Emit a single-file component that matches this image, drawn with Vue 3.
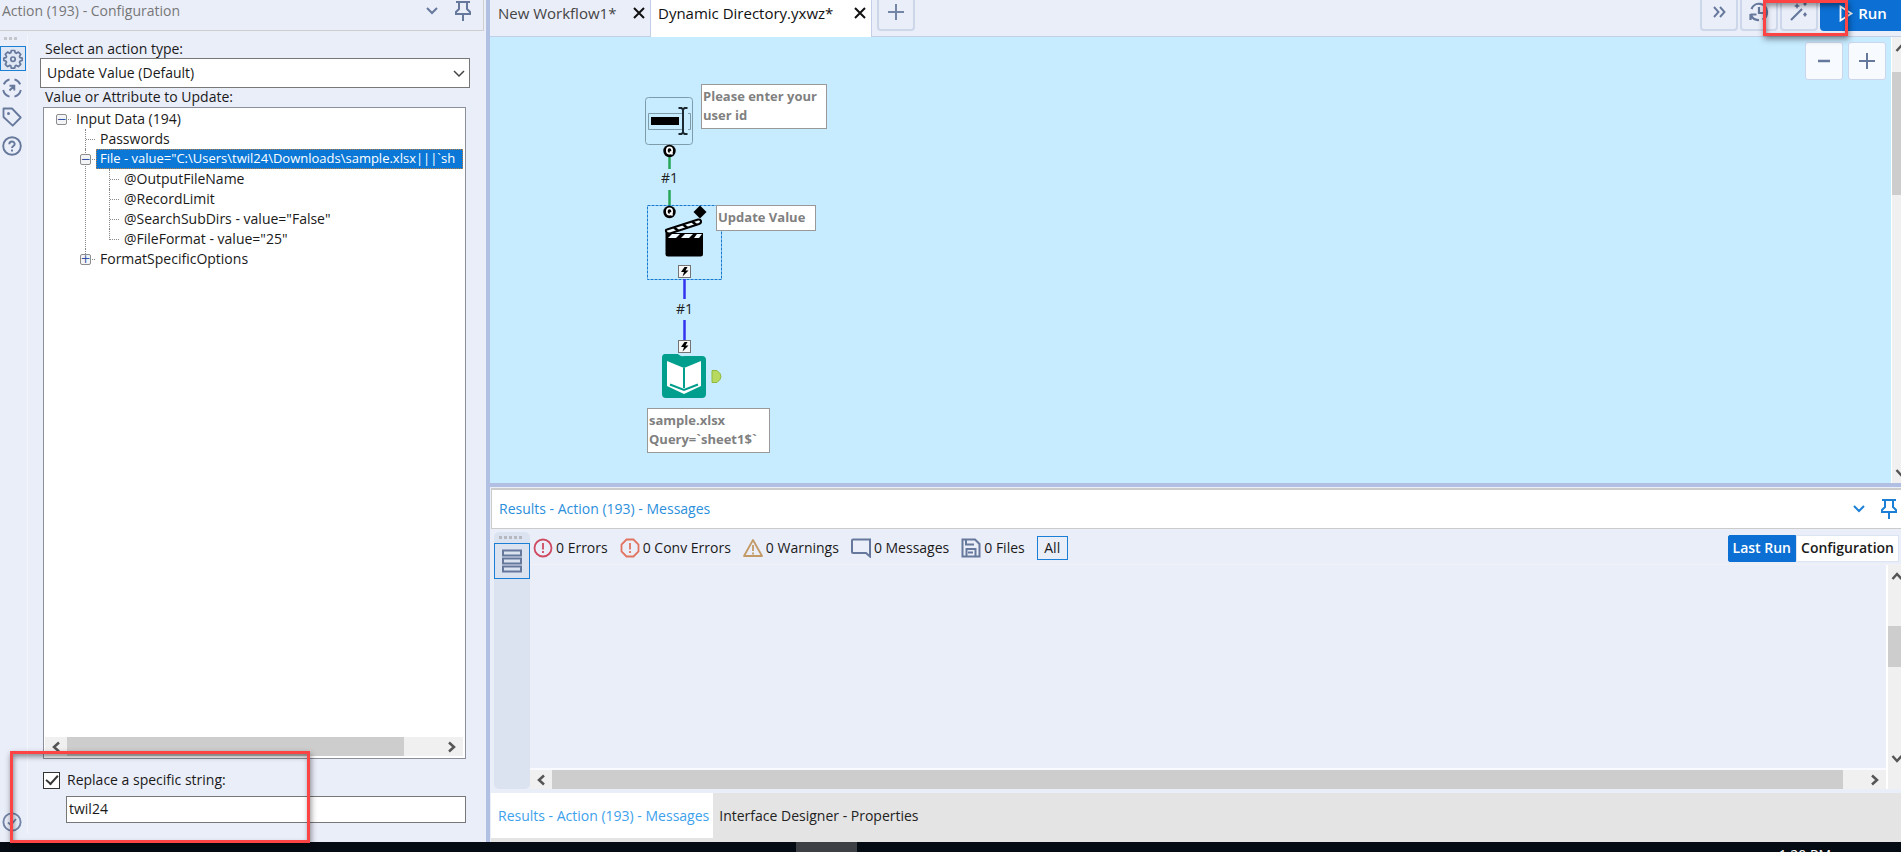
<script setup>
import { ref } from 'vue'

const action = ref('Update Value (Default)')
const replace = ref(true)
const search = ref('twil24')

const children = [
  { label: 'Passwords' },
  {
    label: 'File - value="C:\\Users\\twil24\\Downloads\\sample.xlsx|||`sh',
    toggle: '−',
    selected: true,
    children: ['@OutputFileName', '@RecordLimit', '@SearchSubDirs - value="False"', '@FileFormat - value="25"'],
  },
  { label: 'FormatSpecificOptions', toggle: '+' },
]
</script>

<template>
  <div class="app">
    <div class="main">
      <section class="config">
        <header class="config-head">
          <span class="config-title">Action (193) - Configuration</span>
          <button class="plain" aria-label="Panel menu">
            <svg width="14" height="10" viewBox="0 0 14 10"><path d="M2 2l5 5 5-5" fill="none" stroke="#66789c" stroke-width="2" /></svg>
          </button>
          <button class="plain pin" aria-label="Pin panel">
            <svg width="18" height="22" viewBox="0 0 18 22"><path d="M2 2h14M5 2v7l-3 3v2h14v-2l-3-3V2M9 14v7" fill="none" stroke="#66789c" stroke-width="2" /></svg>
          </button>
        </header>
        <div class="config-body">
          <nav class="rail">
            <span class="grip"></span>
            <button class="rail-btn active" aria-label="Configuration">
              <svg width="20" height="20" viewBox="0 0 20 20" fill="none" stroke="#66789c" stroke-width="1.7" stroke-linejoin="round">
                <path d="M8.3 1.5h3.4l.5 2.3 1.2.5 2-1.2 2.3 2.3-1.2 2 .5 1.2 2.2.5v2.4l-2.2.6-.5 1.2 1.2 2-2.3 2.3-2-1.2-1.2.5-.5 2.2H8.300l-.5-2.200-1.200-.5-2 1.200-2.300-2.300 1.200-2-.5-1.200-2.200-.6V9.100L3 8.600l.5-1.200-1.200-2 2.300-2.300 2 1.200 1.200-.5z" />
                <circle cx="10" cy="10.200" r="2.200" />
              </svg>
            </button>
            <button class="rail-btn" aria-label="Navigation">
              <svg width="20" height="20" viewBox="0 0 20 20" fill="none" stroke="#66789c" stroke-width="1.9">
                <path d="M7.500 1.300a9 9 0 0 0-5.700 5M12.500 1.300a9 9 0 0 1 5.700 5M1.200 12a9 9 0 0 0 6.300 6.700M18.800 12a9 9 0 0 1-6.300 6.700M7.500 12.500l4.500-4.500M7.500 7.700h4.800v4.800" />
              </svg>
            </button>
            <button class="rail-btn" aria-label="Annotation">
              <svg width="20" height="20" viewBox="0 0 20 20" fill="none" stroke="#66789c" stroke-width="1.800" stroke-linejoin="round">
                <path d="M1.500 1.500h8.500l8.700 9-8 8.200-9.200-8.700z" /><circle cx="6.500" cy="6.500" r="1.500" fill="#66789c" stroke="none" />
              </svg>
            </button>
            <button class="rail-btn" aria-label="Help">
              <svg width="20" height="20" viewBox="0 0 20 20" fill="none" stroke="#66789c" stroke-width="1.900">
                <circle cx="10" cy="10" r="8.800" /><path d="M7.300 8.200c0-3.500 5.400-3.500 5.400-.2 0 2-2.700 1.900-2.700 4" /><path d="M10 13.500v2" />
              </svg>
            </button>
            <button class="rail-btn check" aria-label="Status">
              <svg width="20" height="20" viewBox="0 0 20 20" fill="none" stroke="#7283a6" stroke-width="1.900">
                <circle cx="10" cy="10" r="8.600" /><path d="M6 10.500l3 2.500 5-6" />
              </svg>
            </button>
          </nav>
          <div class="form">
            <label for="action" class="lbl">Select an action type:</label>
            <div class="select-wrap">
              <select id="action" v-model="action"><option>Update Value (Default)</option></select>
              <svg class="caret" width="12" height="8" viewBox="0 0 12 8"><path d="M1 1l5 5 5-5" fill="none" stroke="#444" stroke-width="1.500" /></svg>
            </div>
            <div class="lbl second">Value or Attribute to Update:</div>
            <div class="tree-box">
              <ul class="tree">
                <li class="root">
                  <div class="row"><span class="cell"><button class="toggle">−</button></span><span class="node">Input Data (194)</span></div>
                  <ul>
                    <li v-for="c in children" :key="c.label">
                      <div class="row">
                        <span class="cell"><button v-if="c.toggle" class="toggle">{{ c.toggle }}</button></span>
                        <span class="node" :class="{ selected: c.selected }">{{ c.label }}</span>
                      </div>
                      <ul v-if="c.children">
                        <li v-for="g in c.children" :key="g"><div class="row"><span class="cell"></span><span class="node">{{ g }}</span></div></li>
                      </ul>
                    </li>
                  </ul>
                </li>
              </ul>
              <div class="hbar tree-bar">
                <svg class="arrow" width="10" height="12" viewBox="0 0 10 12"><path d="M8 1.500L3 6l5 4.500" /></svg>
                <span class="track"><span class="thumb tree-thumb"></span></span>
                <svg class="arrow" width="10" height="12" viewBox="0 0 10 12"><path d="M2 1.500L7 6l-5 4.500" /></svg>
              </div>
            </div>
            <label class="check-row"><input v-model="replace" type="checkbox" />Replace a specific string:</label>
            <input v-model="search" class="search" type="text" aria-label="String to replace" />
          </div>
        </div>
        <div class="callout callout-replace"></div>
      </section>

      <section class="work">
        <header class="tabs">
          <div class="tab"><a href="#">New Workflow1*</a><button class="plain" aria-label="Close New Workflow1"><svg width="12" height="12" viewBox="0 0 12 12"><path d="M1 1l10 10M11 1L1 11" stroke="#111" stroke-width="2" /></svg></button></div>
          <div class="tab current"><a href="#">Dynamic Directory.yxwz*</a><button class="plain" aria-label="Close Dynamic Directory"><svg width="12" height="12" viewBox="0 0 12 12"><path d="M1 1l10 10M11 1L1 11" stroke="#111" stroke-width="2" /></svg></button></div>
          <button class="tool add" aria-label="New tab"><svg width="16" height="16" viewBox="0 0 16 16"><path d="M8 0v16M0 8h16" stroke="#7585a6" stroke-width="2" /></svg></button>
          <div class="tools">
            <button class="tool" aria-label="More"><svg width="14" height="12" viewBox="0 0 14 12"><path d="M2 1l4.500 5L2 11M8 1l4.500 5L8 11" fill="none" stroke="#66789c" stroke-width="1.900" /></svg></button>
            <button class="tool" aria-label="History"><svg width="20" height="20" viewBox="0 0 20 20"><path d="M2.500 7a8 8 0 0 1 15.500 2.500 8 8 0 0 1-4.500 8M1.500 12v6M1.500 12.500h6M2 13a8 8 0 0 0 8 5M10 5v6h4" fill="none" stroke="#66789c" stroke-width="2.200" /></svg></button>
            <button class="tool" aria-label="Interface designer"><svg width="20" height="20" viewBox="0 0 20 20"><path d="M2 18L13 7" stroke="#66789c" stroke-width="2.200" /><path d="M8 1l1 2 2 1-2 1-1 2-1-2-2-1 2-1zM16 0l2 2-2 2-2-2zM16 10l2 2.500-2 2.500-2-2.500z" fill="#66789c" /></svg></button>
            <button class="run"><svg width="14" height="17" viewBox="0 0 14 17"><path d="M1.500 1.500v14l11-7z" fill="none" stroke="#fff" stroke-width="1.800" /></svg>Run</button>
          </div>
          <div class="callout callout-wand"></div>
        </header>

        <div class="canvas-row">
          <div class="canvas">
            <svg class="flow" width="160" height="320" viewBox="0 0 160 320">
              <rect x="5.500" y="0.500" width="47" height="47" rx="3" fill="none" stroke="#7f9cab" />
              <path d="M43 16.500H8.500v16H43M48 16.500h2.500v16H48" fill="none" stroke="#7f9cab" />
              <rect x="11" y="20" width="28" height="8" />
              <path d="M38.500 11h3l1.500 1.500 1.500-1.500h3M43 12v24M38.500 37h3l1.500-1.500 1.500 1.500h3" fill="none" stroke="#1c2930" stroke-width="2" />
              <path d="M29.500 60v12M29.500 93v16" stroke="#27a659" stroke-width="2.500" />
              <rect x="7.500" y="108.500" width="74" height="74" fill="none" stroke="#1679d0" stroke-dasharray="3 1" />
              <g fill="none" stroke="#fff" stroke-width="1.700">
                <circle cx="29.500" cy="54" r="6.200" fill="#000" stroke="none" /><ellipse cx="29.500" cy="53.500" rx="2.700" ry="3.200" /><path d="M30 54.500l2.500 3" />
                <circle cx="29.500" cy="115" r="6.200" fill="#000" stroke="none" /><ellipse cx="29.500" cy="114.500" rx="2.700" ry="3.200" /><path d="M30 115.500l2.500 3" />
              </g>
              <path d="M60 108.500l6.500 6.500-6.500 6.500-6.500-6.500z" />
              <path d="M25.500 136v21q0 2.500 2.500 2.500h32.500q2.500 0 2.500-2.500v-21z" />
              <path d="M27 132.500L58 122.500q2.500-.5 3 1.500t-2 3L30 136.500q-3.500 0-4-2t1-2z" fill="#eefaff" stroke="#000" stroke-width="2" />
              <path d="M34 130.500l4.500 3.500M43 127.500l4.500 3.500M52 124.500l4.500 3.500" stroke="#000" stroke-width="2.500" />
              <path d="M32 137h8l-4 4h-8zM45 137h8l-4 4h-8zM57 137h5l-3 4h-5z" fill="#eefaff" />
              <path d="M44.500 182v20M44.500 223v20" stroke="#3333f0" stroke-width="2.500" />
              <g fill="#f7f7f7" stroke="#737373"><rect x="38.500" y="168.500" width="12" height="12" /><rect x="38.500" y="243.500" width="12" height="12" /></g>
              <g fill="#000"><path d="M44.500 170h3l-2 3.500h3l-6 6 1.500-4.500h-3z" /><path d="M44.500 245h3l-2 3.500h3l-6 6 1.500-4.500h-3z" /></g>
              <path d="M25 257h13q3 3 6 2h18q4 0 4 4v34q0 4-4 4H26q-4 0-4-4v-36q0-4 3-4z" fill="#009e8c" />
              <path d="M27 264l17 7 17-7v25l-17 8-17-8z" fill="#fff" />
              <path d="M44 271v20M30 287.500l14 5.500 14-5.500" fill="none" stroke="#009e8c" stroke-width="2" />
              <path d="M72 273.500h5q4 3 4 6t-4 6h-5z" fill="#b7d95f" stroke="#91b83d" />
            </svg>
            <span class="link-no first">#1</span>
            <span class="link-no next">#1</span>
            <div class="note note-ask">Please enter your<br />user id</div>
            <div class="note note-update">Update Value</div>
            <div class="note note-file">sample.xlsx<br />Query=`sheet1$`</div>
            <div class="zoomers">
              <button aria-label="Zoom out"><svg width="16" height="16" viewBox="0 0 16 16"><path d="M2 8h12" stroke="#66789c" stroke-width="2.500" /></svg></button>
              <button aria-label="Zoom in"><svg width="16" height="16" viewBox="0 0 16 16"><path d="M8 0v16M0 8h16" stroke="#66789c" stroke-width="2" /></svg></button>
            </div>
          </div>
          <div class="vbar canvas-bar">
            <svg class="arrow" width="12" height="10" viewBox="0 0 12 10"><path d="M1.500 8L6 3l4.500 5" /></svg>
            <span class="vtrack"><span class="vthumb canvas-thumb"></span></span>
            <svg class="arrow" width="12" height="10" viewBox="0 0 12 10"><path d="M1.500 2L6 7l4.500-5" /></svg>
          </div>
        </div>

        <div class="results">
          <header class="results-head">
            <span class="results-title">Results - Action (193) - Messages</span>
            <button class="plain" aria-label="Results menu"><svg width="14" height="10" viewBox="0 0 14 10"><path d="M2 2l5 5 5-5" fill="none" stroke="#1b7fd6" stroke-width="2" /></svg></button>
            <button class="plain pin" aria-label="Pin results"><svg width="18" height="22" viewBox="0 0 18 22"><path d="M2 2h14M5 2v7l-3 3v2h14v-2l-3-3V2M9 14v7" fill="none" stroke="#1b7fd6" stroke-width="2" /></svg></button>
          </header>
          <div class="results-body">
            <nav class="strip">
              <span class="dots"></span>
              <button aria-label="Messages list"><svg width="22" height="24" viewBox="0 0 22 24"><path d="M2 1.500h18v5H2zM2 9.500h18v5H2zM2 17.500h18v5H2z" fill="none" stroke="#66789c" stroke-width="2" /></svg></button>
            </nav>
            <div class="log">
              <div class="filters">
                <button class="filter"><svg width="20" height="20" viewBox="0 0 20 20" fill="none" stroke="#cf4a60" stroke-width="1.800"><circle cx="10" cy="10" r="8.500" /><path d="M10 5v6.500M10 13v2" /></svg>0 Errors</button>
                <button class="filter"><svg width="20" height="20" viewBox="0 0 20 20" fill="none" stroke="#e2735f" stroke-width="1.800"><path d="M6.500 1.500h7l5 5v7l-5 5h-7l-5-5v-7z" /><path d="M10 5v6.500M10 13v2" /></svg>0 Conv Errors</button>
                <button class="filter"><svg width="20" height="20" viewBox="0 0 20 20" fill="none" stroke="#c39a66" stroke-width="1.800" stroke-linejoin="round"><path d="M10 2l9 16H1z" /><path d="M10 7v6M10 14.500v2" /></svg>0 Warnings</button>
                <button class="filter"><svg width="20" height="20" viewBox="0 0 20 20" fill="none" stroke="#66789c" stroke-width="2"><path d="M2 1.500h17v17L15 15H2q-1 0-1-1V2.500q0-1 1-1z" /></svg>0 Messages</button>
                <button class="filter"><svg width="20" height="20" viewBox="0 0 20 20" fill="none" stroke="#66789c" stroke-width="2"><path d="M1.500 1.500H14l4.500 4.500v12.500h-17zM5 2v4.500h8M5.500 18v-7h9v7M7 14.500h5" /></svg>0 Files</button>
                <button class="all">All</button>
                <div class="modes"><button class="mode on">Last Run</button><button class="mode">Configuration</button></div>
              </div>
              <div class="pane">
                <div class="pane-left">
                  <div class="messages"></div>
                  <div class="hbar log-bar">
                    <svg class="arrow" width="10" height="12" viewBox="0 0 10 12"><path d="M8 1.500L3 6l5 4.500" /></svg>
                    <span class="track"><span class="thumb log-thumb"></span></span>
                    <svg class="arrow" width="10" height="12" viewBox="0 0 10 12"><path d="M2 1.500L7 6l-5 4.500" /></svg>
                  </div>
                </div>
                <div class="vbar log-vbar">
                  <svg class="arrow" width="12" height="10" viewBox="0 0 12 10"><path d="M1.500 8L6 3l4.500 5" /></svg>
                  <span class="vtrack"><span class="vthumb log-vthumb"></span></span>
                  <svg class="arrow" width="12" height="10" viewBox="0 0 12 10"><path d="M1.500 2L6 7l4.500-5" /></svg>
                </div>
              </div>
            </div>
          </div>
          <nav class="bottom-tabs"><a href="#" class="here">Results - Action (193) - Messages</a><a href="#">Interface Designer - Properties</a></nav>
        </div>
      </section>
    </div>
    <footer class="taskbar"><span class="task"></span><span class="clock">1:20 PM</span></footer>
  </div>
</template>

<style>
body { overflow: hidden; }
</style>

<style scoped>
* { box-sizing: border-box; }
.app { height: 100vh; display: flex; flex-direction: column; overflow: hidden; font: 14px/20px "Open Sans", "Noto Sans", sans-serif; color: #1a1a1a; background: #eaeef9; }
button, input, select { font: inherit; color: inherit; margin: 0; }
button { padding: 0; border: 0; background: none; display: flex; align-items: center; justify-content: center; flex: none; }
a { color: inherit; text-decoration: none; }
svg { display: block; flex: none; }
.main { flex: 1; min-height: 0; display: flex; }

.config { position: relative; width: 490px; flex: none; display: flex; flex-direction: column; border-right: 4px solid #b1c0e2; }
.config-head { height: 31px; margin-right: 2px; display: flex; align-items: center; gap: 15px; padding: 0 11px 9px 2px; border: solid #cfcfcf; border-width: 0 1px 1px 0; color: #777; }
.config-title { flex: 1; }
.config-body { flex: 1; min-height: 0; display: flex; }
.rail { width: 28px; margin: 4px 0 8px; display: flex; flex-direction: column; gap: 4px; border-right: 1px solid #f3f5fb; }
.grip { width: 14px; height: 3px; margin: 2px 0 2px 4px; background: repeating-linear-gradient(90deg, #c4c6cc 0 3px, transparent 3px 5px); }
.rail-btn { width: 24px; height: 25px; border: 1px solid transparent; }
.active { width: 26px; border: 1px solid #1b7fd6; background: #dfe7f5; }
.check { margin-top: auto; }
.form { flex: 1; min-width: 0; display: flex; flex-direction: column; padding: 8px 20px 19px 15px; }
.lbl { padding-left: 2px; height: 19px; }
.second { line-height: 18px; }
.select-wrap { position: relative; margin: 0 -4px 0 -3px; }
select { display: block; width: 100%; height: 30px; border: 1px solid #777; background: #fff; padding: 0 6px; appearance: none; border-radius: 0; }
.caret { position: absolute; right: 5px; top: 12px; }
.tree-box { flex: 1; min-height: 0; display: flex; flex-direction: column; justify-content: space-between; border: 1px solid #8b8f9b; background: #fff; padding: 1px 2px 2px 1px; }
ul { list-style: none; margin: 0; padding: 0; }
.tree { overflow: hidden; padding-left: 4px; }
.tree ul { margin-left: 24px; }
.tree li { position: relative; }
.tree ul li::before { content: ""; position: absolute; left: 12px; top: 0; bottom: 0; border-left: 1px dotted #888; }
.tree ul li:last-child::before { bottom: auto; height: 11px; }
.row { display: flex; height: 20px; white-space: nowrap; }
.cell { position: relative; width: 23px; flex: none; }
.cell::before { content: ""; position: absolute; left: 13px; right: 1px; top: 10px; border-top: 1px dotted #888; }
.toggle { position: absolute; left: 7px; top: 5px; width: 11px; height: 11px; border: 1px solid #8d8d8d; border-radius: 2px; background: #f3f4f6; color: #3450a4; font: 12px/9px "DejaVu Sans", sans-serif; }
.node { padding-left: 4px; line-height: 19px; }
.selected { flex: 1; min-width: 0; overflow: hidden; font-size: 13px; background: #0b78d7; color: #fff; outline: 1px dotted #c08040; outline-offset: -1px; }
.hbar { display: flex; align-items: center; background: #f0f0f0; height: 19px; padding: 0 6px; flex: none; }
.arrow { fill: none; stroke: #555; stroke-width: 2.500; }
.track { flex: 1; height: 100%; margin: 0 6px; display: flex; }
.thumb { background: #cdcdcd; height: 100%; }
.tree-thumb { width: 90%; }
.check-row { display: flex; align-items: center; gap: 7px; height: 18px; margin-top: 12px; }
.check-row input { appearance: none; width: 17px; height: 17px; border: 1px solid #333; background: #fff; display: grid; place-items: center; }
.check-row input:checked::before { content: ""; width: 10px; height: 5px; border: solid #333; border-width: 0 0 2px 2px; transform: translateY(-2px) rotate(-48deg); }
.search { margin: 7px 0 0 23px; height: 27px; border: 1px solid #777; background: #fff; padding: 0 2px 2px; border-radius: 0; outline: 0; }
.callout { position: absolute; z-index: 3; border: 3px solid #fd4444; box-shadow: 1px 3px 6px rgba(0, 0, 0, .45), inset 1px 3px 5px rgba(0, 0, 0, .4); pointer-events: none; }
.callout-replace { left: 10px; bottom: -1px; width: 300px; height: 92px; }
.callout-wand { right: 53px; top: 0; width: 85px; height: 36px; }

.work { flex: 1; min-width: 0; display: flex; flex-direction: column; }
.tabs { position: relative; height: 37px; flex: none; display: flex; align-items: flex-start; font-size: 15px; border-bottom: 1px solid #c3cfe6; }
.tab { width: 161px; height: 36px; display: flex; align-items: center; justify-content: space-between; padding: 0 5px 10px 8px; border-right: 1px solid #c3cfe6; color: #444; }
.current { width: 221px; height: 37px; background: #fff; color: #111; padding: 0 5px 11px 7px; }
.tool { width: 38px; height: 31px; border: solid #cdd7ea; border-width: 0 2px 2px; border-radius: 0 0 4px 4px; padding-bottom: 5px; }
.add { margin-left: 5px; }
.tools { margin-left: auto; display: flex; gap: 2px; }
.run { width: 81px; height: 31px; gap: 5px; background: #0b6fd3; color: #fff; font-weight: 600; padding: 0 0 5px 5px; border-radius: 0 0 0 4px; }
.canvas-row { flex: 1; min-height: 0; display: flex; overflow: hidden; }
.canvas { position: relative; flex: 1; background: #c7ecff; }
.flow { position: absolute; left: 150px; top: 60px; }
.link-no { position: absolute; color: #222; }
.first { left: 171px; top: 131px; }
.next { left: 186px; top: 262px; }
.note { position: absolute; border: 1px solid #999; background: #fff; color: #808080; font-weight: 700; font-size: 13px; line-height: 19px; padding: 2px 1px; white-space: nowrap; }
.note-ask { left: 211px; top: 47px; width: 126px; height: 45px; }
.note-update { left: 226px; top: 168px; width: 100px; height: 26px; }
.note-file { left: 157px; top: 371px; width: 123px; height: 45px; }
.zoomers { position: absolute; right: 5px; top: 5px; display: flex; gap: 5px; }
.zoomers button { width: 38px; height: 38px; background: #f7faff; border: 1px solid #cbd5ec; border-radius: 3px; }
.vbar { display: flex; flex-direction: column; align-items: flex-start; background: #f0f0f0; border-left: 1px solid #fff; flex: none; overflow: hidden; }
.canvas-bar { width: 10px; padding: 6px 0 5px; }
.canvas-bar .arrow { margin-left: 3px; }
.vtrack { flex: 1; width: 100%; }
.vthumb { display: block; background: #cdcdcd; }
.canvas-thumb { margin-top: 19px; height: 123px; }
.results { height: 359px; flex: none; display: flex; flex-direction: column; border-top: 4px solid #b1c0e2; }
.results-head { height: 41px; margin-top: 1px; margin-left: 1px; display: flex; align-items: center; gap: 14px; padding: 0 3px 1px 7px; background: #fff; border: solid #cbcbcb; border-width: 2px 0 1px 1px; color: #2b8fdc; flex: none; }
.results-title { flex: 1; }
.results-body { flex: 1; min-height: 0; display: flex; padding: 3px 0 4px 4px; }
.strip { width: 36px; background: #dbe2f0; border-radius: 5px; display: flex; flex-direction: column; }
.dots { height: 3px; width: 23px; margin: 4px 0 4px 5px; background: repeating-linear-gradient(90deg, #b5b8be 0 3px, transparent 3px 5px); }
.strip button { height: 36px; border: 1px solid #1b7fd6; }
.log { flex: 1; min-width: 0; display: flex; flex-direction: column; }
.filters { height: 33px; flex: none; display: flex; align-items: center; padding: 0 2px 0 3px; gap: 12px; border-bottom: 1px solid #f1f1f6; }
.filter { gap: 3px; }
.all { width: 31px; height: 24px; border: 1px solid #1b7fd6; }
.modes { margin-left: auto; display: flex; font-weight: 600; }
.mode { height: 27px; padding: 0 4px; background: #fff; border: 1px solid #dce3f3; }
.mode.on { background: #0b6fd3; border-color: #0b6fd3; color: #fff; border-radius: 2px 0 0 2px; }
.pane { flex: 1; min-height: 0; display: flex; }
.pane-left { flex: 1; min-width: 0; display: flex; flex-direction: column; }
.messages { flex: 1; border-bottom: 2px solid #f9faff; }
.log-bar { padding-right: 0; }
.log-bar .track { margin: 0 27px 0 6px; }
.log-bar .arrow:last-child { margin-right: 6px; }
.log-thumb { width: 100%; }
.log-vbar { width: 15px; padding: 6px 0 25px; border-left: 2px solid #fff; }
.log-vbar .arrow { margin-left: 3px; }
.log-vthumb { margin-top: 45px; height: 41px; }
.bottom-tabs { height: 49px; flex: none; display: flex; margin-left: 1px; background: #e4e4e4; color: #222; }
.bottom-tabs a { height: 45px; padding: 0 6px; line-height: 46px; }
.bottom-tabs .here { background: #fff; color: #3da1ec; padding: 0 4px 0 7px; }
.taskbar { height: 10px; flex: none; background: #050b13; overflow: hidden; display: flex; justify-content: space-between; padding: 0 70px 0 796px; }
.task { width: 61px; background: #3c3f44; }
.clock { color: #fff; line-height: 26px; }
</style>
